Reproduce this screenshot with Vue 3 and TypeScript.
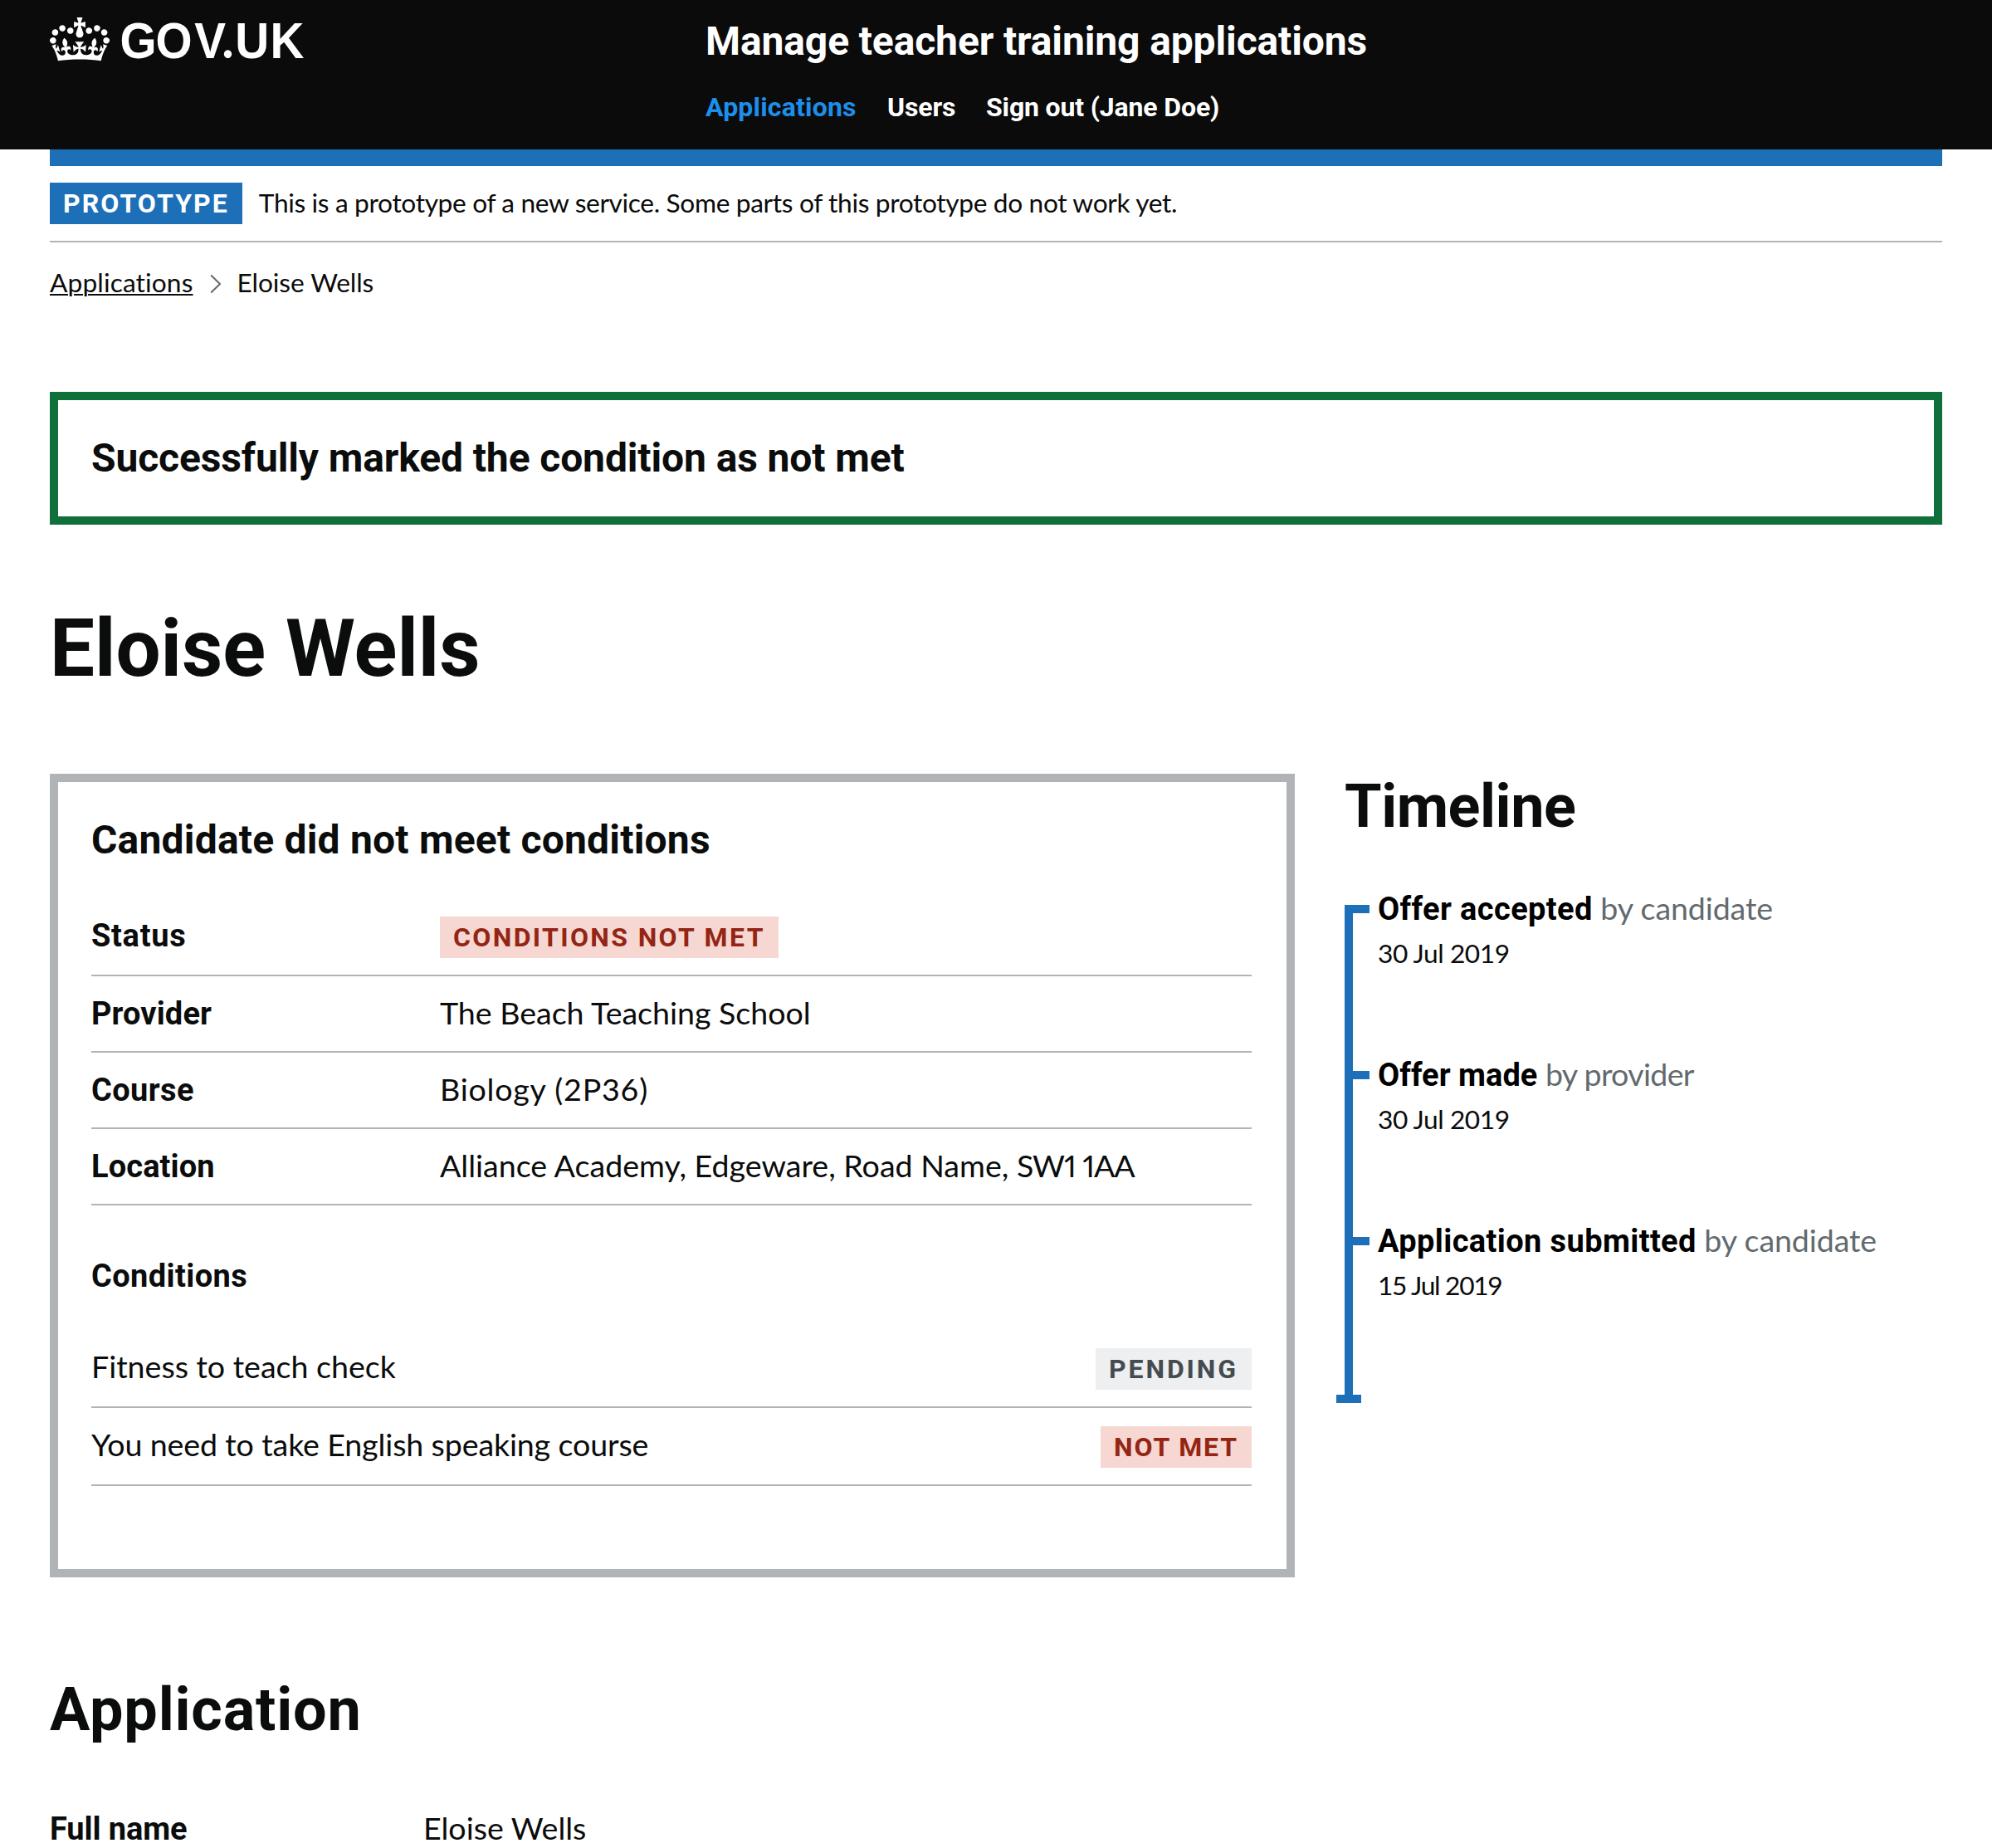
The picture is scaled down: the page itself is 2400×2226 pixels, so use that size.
<script setup lang="ts">
interface Detail { label: string; value: string; cls: string; tag?: boolean; postcode?: string }
interface Condition { text: string; status: string; tone: string; cls: string }
interface TimelineEvent { title: string; actor: string; date: string; cls: string }

const details: Detail[] = [
  { label: 'Status', value: 'Conditions not met', cls: 'status', tag: true },
  { label: 'Provider', value: 'The Beach Teaching School', cls: 'provider' },
  { label: 'Course', value: 'Biology (2P36)', cls: 'course' },
  { label: 'Location', value: 'Alliance Academy, Edgeware, Road Name, ', postcode: 'SW1 1AA', cls: 'location' },
]
const conditions: Condition[] = [
  { text: 'Fitness to teach check', status: 'Pending', tone: 'grey', cls: 'fitness' },
  { text: 'You need to take English speaking course', status: 'Not met', tone: 'red', cls: 'english' },
]
const events: TimelineEvent[] = [
  { title: 'Offer accepted', actor: 'by candidate', date: '30 Jul 2019', cls: 'accepted' },
  { title: 'Offer made', actor: 'by provider', date: '30 Jul 2019', cls: 'made' },
  { title: 'Application submitted', actor: 'by candidate', date: '15 Jul 2019', cls: 'submitted' },
]
</script>

<template>
  <div class="page">
    <header class="header">
      <svg class="logo" width="320" height="56" viewBox="0 0 320 56" fill="#fff">
        <path
          transform="scale(.5455)"
          fill-rule="evenodd"
          d="M25 30.2c3.5 1.5 7.7-.2 9.1-3.7 1.5-3.6-.2-7.8-3.9-9.2-3.6-1.4-7.6.3-9.1 3.9-1.4 3.5.3 7.5 3.9 9zM9 39.5c3.6 1.5 7.8-.2 9.2-3.7 1.5-3.6-.2-7.8-3.9-9.1-3.6-1.5-7.6.2-9.1 3.8-1.4 3.5.3 7.5 3.8 9zM4.4 57.2c3.5 1.5 7.7-.2 9.1-3.8 1.5-3.6-.2-7.7-3.9-9.1-3.5-1.5-7.6.3-9.1 3.8-1.4 3.5.3 7.6 3.9 9.1zm38.3-21.4c3.5 1.5 7.7-.2 9.1-3.8 1.5-3.6-.2-7.7-3.9-9.1-3.6-1.5-7.6.3-9.1 3.8-1.3 3.6.4 7.7 3.9 9.1zm64.4-5.6c-3.6 1.5-7.8-.2-9.1-3.7-1.5-3.6.2-7.8 3.8-9.2 3.6-1.4 7.7.3 9.2 3.9 1.3 3.5-.4 7.5-3.9 9zm15.9 9.3c-3.6 1.5-7.7-.2-9.1-3.7-1.5-3.6.2-7.8 3.7-9.1 3.6-1.5 7.7.2 9.2 3.8 1.5 3.5-.3 7.5-3.8 9zm4.7 17.7c-3.6 1.5-7.8-.2-9.2-3.8-1.5-3.6.2-7.7 3.9-9.1 3.6-1.5 7.7.3 9.2 3.8 1.3 3.5-.4 7.6-3.9 9.1zM89.3 35.8c-3.6 1.5-7.8-.2-9.2-3.8-1.4-3.6.2-7.7 3.9-9.1 3.6-1.5 7.7.3 9.2 3.8 1.4 3.6-.3 7.7-3.9 9.1zM69.7 17.7l8.9 4.7V9.3l-8.9 2.8c-.2-.3-.5-.6-.9-.9L72.4 0H59.6l3.5 11.2c-.3.3-.6.5-.9.9l-8.8-2.8v13.1l8.8-4.7c.3.3.6.7.9.9l-5 15.4v.1c-.2.8-.4 1.6-.4 2.4 0 4.1 3.1 7.5 7 8.1h.2c.3 0 .7.1 1 .1.4 0 .7 0 1-.1h.2c4-.6 7.1-4.1 7.1-8.1 0-.8-.1-1.7-.4-2.4V34l-5.1-15.4c.4-.2.7-.6 1-.9zM66 92.8c16.9 0 32.8 1.1 47.1 3.2 4-16.9 8.9-26.7 14-33.5l-9.6-3.4c1 4.9 1.1 7.2 0 10.2-1.5-1.4-3-4.3-4.2-8.7L108.6 76c2.8-2 5-3.2 7.5-3.3-4.4 9.4-10 11.9-13.6 11.2-4.3-.8-6.3-4.6-5.6-7.9 1-4.7 5.7-5.9 8-.5 4.3-8.7-3-11.4-7.6-8.8 7.1-7.2 7.9-13.5 2.1-21.1-8 6.1-8.1 12.3-4.5 20.8-4.7-5.4-12.1-2.5-9.5 6.2 3.4-5.2 7.9-2 7.2 3.1-.6 4.3-6.4 7.8-13.5 7.2-10.3-.9-10.9-8-11.2-13.8 2.5-.5 7.1 1.8 11 7.3L80.2 60c-4.1 4.4-8 5.3-12.3 5.4 1.4-4.4 8-11.6 8-11.6H55.5s6.4 7.2 7.9 11.6c-4.2-.1-8-1-12.3-5.4l1.4 16.4c3.9-5.5 8.5-7.7 10.9-7.3-.3 5.8-.9 12.8-11.1 13.8-7.2.6-12.9-2.9-13.5-7.2-.7-5 3.8-8.3 7.1-3.1 2.7-8.7-4.6-11.6-9.4-6.2 3.7-8.5 3.6-14.7-4.6-20.8-5.8 7.6-5 13.9 2.2 21.1-4.7-2.6-11.9.1-7.7 8.8 2.3-5.5 7.1-4.2 8.1.5.7 3.3-1.3 7.1-5.7 7.9-3.5.7-9-1.8-13.5-11.2 2.5.1 4.7 1.3 7.5 3.3l-4.7-15.4c-1.2 4.4-2.7 7.2-4.3 8.7-1.1-3-.9-5.3 0-10.2l-9.5 3.4c5 6.9 9.9 16.7 14 33.5 14.8-2.1 30.8-3.2 47.7-3.2z"
        />
        <text class="wordmark" transform="scale(.93 1)" x="90.8 137.2 187.4 223.3 240 285.4" y="49">GOV<tspan class="dot">.</tspan>UK</text>
      </svg>
      <div class="service">
        <div class="service-name">Manage teacher training applications</div>
        <nav class="nav">
          <a class="active">Applications</a><a class="users">Users</a><a class="sign-out">Sign out (Jane Doe)</a>
        </nav>
      </div>
    </header>

    <div class="container">
      <div class="blue-bar"></div>
      <div class="phase">
        <strong class="tag blue">Prototype</strong>
        <span class="phase-text">This is a prototype of a new service. Some parts of this prototype do not work yet.</span>
      </div>

      <div class="breadcrumbs">
        <a>Applications</a>
        <svg class="chevron" width="14" height="24" viewBox="0 0 14 24" fill="none" stroke="#626a6e" stroke-width="2">
          <path d="M1.2 1.5 12 12 1.2 22.5" />
        </svg>
        <span>Eloise Wells</span>
      </div>

      <div class="banner"><h2>Successfully marked the condition as not met</h2></div>

      <h1>Eloise Wells</h1>

      <div class="columns">
        <section class="card">
          <h2>Candidate did not meet conditions</h2>
          <div class="details">
            <div v-for="d in details" :key="d.label" class="row" :class="d.cls">
              <div class="label">{{ d.label }}</div>
              <strong v-if="d.tag" class="tag red">{{ d.value }}</strong>
              <div v-else class="value">{{ d.value }}<span v-if="d.postcode" class="postcode">{{ d.postcode }}</span></div>
            </div>
          </div>
          <h3>Conditions</h3>
          <div class="conditions">
            <div v-for="c in conditions" :key="c.text" class="row spread" :class="c.cls">
              <div class="value">{{ c.text }}</div>
              <strong class="tag" :class="c.tone">{{ c.status }}</strong>
            </div>
          </div>
        </section>

        <aside>
          <h2 class="heading">Timeline</h2>
          <div class="timeline">
            <div v-for="e in events" :key="e.title" class="event" :class="e.cls">
              <div class="event-title"><b>{{ e.title }}</b>{{ ' ' }}<span>{{ e.actor }}</span></div>
              <div class="event-date">{{ e.date }}</div>
            </div>
          </div>
        </aside>
      </div>

      <h2 class="heading application">Application</h2>
      <div class="row wide">
        <div class="label">Full name</div>
        <div class="value">Eloise Wells</div>
      </div>
    </div>
  </div>
</template>

<style>
body { margin: 0; background: #fff; }
</style>

<style scoped>
.page {
  width: 2400px;
  height: 2226px;
  overflow: hidden;
  color: #0b0c0c;
  font-family: Roboto, sans-serif;
  background: #fff;
}
h1, h2, h3 { margin: 0; font-weight: 700; }
.header {
  display: flex;
  box-sizing: border-box;
  height: 180px;
  padding-left: 60px;
  background: #0b0b0b;
  color: #fff;
}
.logo { flex: none; width: 320px; margin: 21px 470px 0 0; overflow: visible; }
.wordmark { font: 700 61px "Liberation Sans", Arial, sans-serif; }
.dot { font-family: Lato, sans-serif; font-weight: 900; }
.service { padding-top: 25px; font-weight: 700; }
.service-name { font-size: 48px; line-height: 50px; letter-spacing: -0.0025em; }
.nav { display: flex; margin-top: 34px; font-size: 32px; line-height: 40px; }
.nav a { letter-spacing: 0.0056em; }
.nav .active { width: 219px; color: #1d8feb; }
.nav .users { width: 119px; letter-spacing: -0.0042em; }
.nav .sign-out { letter-spacing: -0.0045em; }

.container { margin: 0 60px; }
.blue-bar { height: 20px; background: #1d70b8; }
.phase {
  display: flex;
  align-items: baseline;
  height: 50px;
  padding: 20px 0;
  border-bottom: 2px solid #b1b4b6;
}
.phase-text {
  margin-left: 20px;
  font: 31.7px/40px Lato, sans-serif;
  letter-spacing: -0.0112em;
}
.tag {
  display: block;
  flex: none;
  height: 50px;
  padding: 0 16px;
  font-size: 32px;
  line-height: 50px;
  font-weight: 700;
  letter-spacing: 0.065em;
  text-transform: uppercase;
}
.blue { background: #1d70b8; color: #fff; }
.red { background: #f6d7d2; color: #942514; }
.grey { background: #eeeff0; color: #454c50; }

.breadcrumbs {
  display: flex;
  margin-top: 28px;
  font: 31.7px/40px Lato, sans-serif;
  font-variant-ligatures: none;
}
.breadcrumbs a {
  letter-spacing: 0.004em;
  text-decoration: underline;
  text-decoration-thickness: 2px;
  text-underline-offset: 2px;
}
.breadcrumbs span { letter-spacing: -0.003em; }
.chevron { margin: 10px 19px 0 20px; }

.banner {
  box-sizing: border-box;
  height: 160px;
  margin-top: 112px;
  padding: 40px 40px 0;
  border: 10px solid #10703c;
}
.banner h2 { font-size: 48px; line-height: 60px; letter-spacing: -0.0025em; }
h1 { margin: 99px 0 101px; font-size: 96px; line-height: 100px; }

.columns { display: flex; gap: 60px; }
.card {
  box-sizing: border-box;
  flex: none;
  width: 1500px;
  height: 968px;
  padding: 45px 42px 0 40px;
  border: 10px solid #b1b4b6;
}
.card h2 { font-size: 48px; line-height: 50px; letter-spacing: 0.0041em; }
.details { margin-top: 47px; }
.row {
  display: flex;
  align-items: baseline;
  box-sizing: border-box;
  height: 92px;
  padding-top: 19px;
  border-bottom: 2px solid #b1b4b6;
  font-size: 38px;
  line-height: 50px;
}
.label { flex: none; width: 420px; font-weight: 700; letter-spacing: 0.003em; }
.value {
  font-family: Lato, sans-serif;
  font-size: 37.6px;
  letter-spacing: -0.0005em;
  white-space: pre;
}
.status { padding-top: 18px; }
.status .label { letter-spacing: 0.018em; }
.status .tag { letter-spacing: 0.0735em; }
.course .label { letter-spacing: 0.01em; }
.course .value { letter-spacing: 0.021em; }
.location .value { letter-spacing: 0; }
.location .postcode { letter-spacing: -0.03em; font-variant-numeric: proportional-nums; }
.english .value { letter-spacing: -0.0035em; }
.fitness .tag { letter-spacing: 0.09em; }
.english .tag { letter-spacing: 0.059em; }
.spread { justify-content: space-between; height: 94px; }
h3 { font-size: 38px; line-height: 50px; letter-spacing: 0.01em; }
.card h3 { margin-top: 60px; }
.conditions { margin-top: 40px; }
.wide { margin-top: 58px; border: 0; }
.wide .label { width: 450px; letter-spacing: -0.0028em; }

.heading { font-size: 72px; line-height: 80px; letter-spacing: -0.0067em; }
.application { margin-top: 120px; letter-spacing: 0.0111em; }
.timeline {
  position: relative;
  height: 600px;
  margin-top: 78px;
  border-left: 10px solid #1d70b8;
}
.timeline::after {
  content: "";
  position: absolute;
  left: -20px;
  bottom: 0;
  width: 30px;
  height: 10px;
  background: #1d70b8;
}
.event { position: relative; height: 200px; padding-left: 30px; }
.event::before {
  content: "";
  position: absolute;
  left: 0;
  top: 0;
  width: 20px;
  height: 10px;
  background: #1d70b8;
}
.event-title {
  position: relative;
  top: -16px;
  height: 40px;
  color: #000;
  font: 37.6px/40px Lato, sans-serif;
  letter-spacing: -0.0029em;
}
.event-title b { font-family: Roboto, sans-serif; font-size: 38px; letter-spacing: 0.01em; }
.event-title span { color: #626a6e; }
.made b { letter-spacing: 0.001em; }
.made span { letter-spacing: -0.018em; }
.event-date {
  position: relative;
  top: -2px;
  font: 31.7px/40px Lato, sans-serif;
  letter-spacing: -0.0145em;
}
.submitted .event-date { letter-spacing: -0.041em; }
</style>
